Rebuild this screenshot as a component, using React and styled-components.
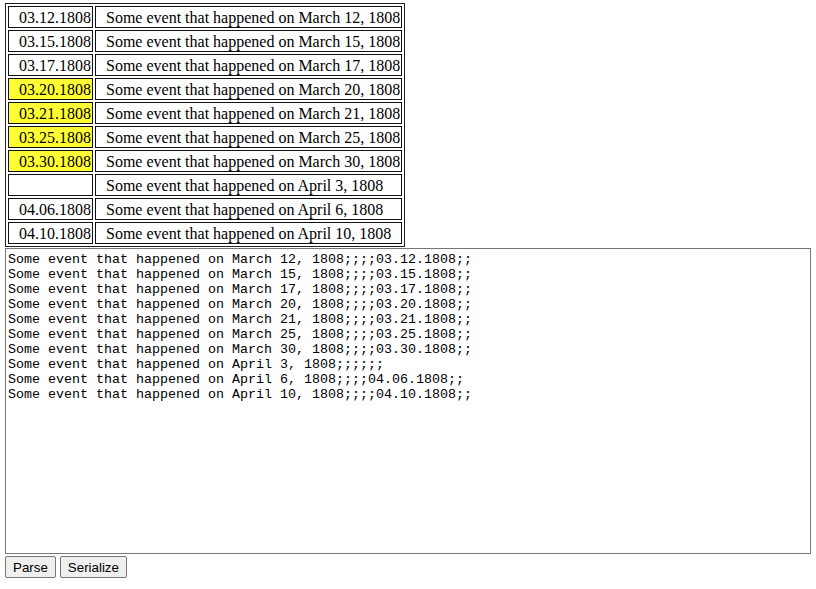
import React from "react";
import styled, { createGlobalStyle } from "styled-components";

const Global = createGlobalStyle`
  html, body { background: #fff; }
  body {
    margin: 3px 5px;
    font-family: "Liberation Serif", "Times New Roman", serif;
    font-size: 16px;
    color: #000;
  }
`;

const Page = styled.div`
  display: flex;
  flex-direction: column;
  align-items: flex-start;
`;

const Table = styled.table`
  border: 1px solid #222;
  border-spacing: 2px;
  border-collapse: separate;
  font-family: "Liberation Serif", "Times New Roman", serif;
  font-size: 16px;
`;

const Cell = styled.td`
  border: 1px solid #111;
  padding: 2px 1px 0 10px;
  line-height: 18px;
  height: 18px;
  white-space: nowrap;
  background: ${(p) => (p.$highlight ? "#ffff33" : "transparent")};
`;

const Editor = styled.textarea`
  display: block;
  box-sizing: border-box;
  width: 100%;
  height: 306px;
  margin: 1px 0 0;
  padding: 3px 2px 2px;
  border: 1px solid #767676;
  font-family: "Liberation Mono", "Courier New", monospace;
  font-size: 13.333px;
  line-height: 15px;
  color: #000;
  resize: none;
  outline: none;
`;

const Toolbar = styled.div`
  display: flex;
  gap: 4px;
  margin-top: 2px;
`;

const Button = styled.button`
  font-family: "Liberation Sans", Arial, sans-serif;
  font-size: 13.333px;
  height: 22px;
  padding: 1px 7px;
  background: #efefef;
  border: 1px solid #767676;
  border-radius: 2px;
  color: #000;
  line-height: 15px;
`;

const rows = [
  { date: "03.12.1808", text: "Some event that happened on March 12, 1808" },
  { date: "03.15.1808", text: "Some event that happened on March 15, 1808" },
  { date: "03.17.1808", text: "Some event that happened on March 17, 1808" },
  { date: "03.20.1808", text: "Some event that happened on March 20, 1808", hl: true },
  { date: "03.21.1808", text: "Some event that happened on March 21, 1808", hl: true },
  { date: "03.25.1808", text: "Some event that happened on March 25, 1808", hl: true },
  { date: "03.30.1808", text: "Some event that happened on March 30, 1808", hl: true },
  { date: "", text: "Some event that happened on April 3, 1808" },
  { date: "04.06.1808", text: "Some event that happened on April 6, 1808" },
  { date: "04.10.1808", text: "Some event that happened on April 10, 1808" },
];

const serialized = rows.map((r) => `${r.text};;;;${r.date};;`).join("\n") + "\n";

export default function App() {
  return (
    <Page>
      <Global />
      <Table>
        <tbody>
          {rows.map((r, i) => (
            <tr key={i}>
              <Cell $highlight={r.hl}>{r.date}</Cell>
              <Cell>{r.text}</Cell>
            </tr>
          ))}
        </tbody>
      </Table>
      <Editor defaultValue={serialized} spellCheck={false} />
      <Toolbar>
        <Button>Parse</Button>
        <Button>Serialize</Button>
      </Toolbar>
    </Page>
  );
}
